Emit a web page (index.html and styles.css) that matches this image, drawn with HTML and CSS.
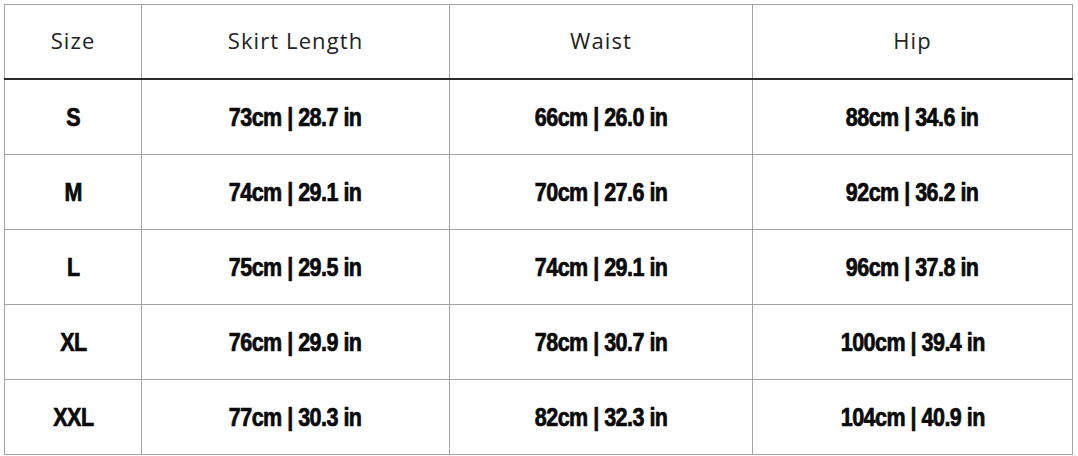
FILE: index.html
```html
<!DOCTYPE html>
<html>
<head>
<meta charset="utf-8">
<link rel="stylesheet" href="styles.css">
</head>
<body>
<table class="size-chart">
  <colgroup>
    <col class="c-size"><col class="c-len"><col class="c-waist"><col class="c-hip">
  </colgroup>
  <thead>
    <tr><th>Size</th><th>Skirt Length</th><th>Waist</th><th>Hip</th></tr>
  </thead>
  <tbody>
    <tr><td><span class="v">S</span></td><td><span class="v">73cm | 28.7 in</span></td><td><span class="v">66cm | 26.0 in</span></td><td><span class="v">88cm | 34.6 in</span></td></tr>
    <tr><td><span class="v">M</span></td><td><span class="v">74cm | 29.1 in</span></td><td><span class="v">70cm | 27.6 in</span></td><td><span class="v">92cm | 36.2 in</span></td></tr>
    <tr><td><span class="v">L</span></td><td><span class="v">75cm | 29.5 in</span></td><td><span class="v">74cm | 29.1 in</span></td><td><span class="v">96cm | 37.8 in</span></td></tr>
    <tr><td><span class="v">XL</span></td><td><span class="v">76cm | 29.9 in</span></td><td><span class="v">78cm | 30.7 in</span></td><td><span class="v">100cm | 39.4 in</span></td></tr>
    <tr><td><span class="v">XXL</span></td><td><span class="v">77cm | 30.3 in</span></td><td><span class="v">82cm | 32.3 in</span></td><td><span class="v">104cm | 40.9 in</span></td></tr>
  </tbody>
</table>
</body>
</html>
```

FILE: styles.css
```css
html, body {
  margin: 0;
  padding: 0;
  background: #fff;
}
body {
  padding: 4px 0 0 4px;
}
.size-chart {
  border-collapse: collapse;
  table-layout: fixed;
  width: 1068px;
}
.c-size { width: 137px; }
.c-len { width: 308px; }
.c-waist { width: 303px; }
.c-hip { width: 320px; }
.size-chart th,
.size-chart td {
  border: 1px solid #a4a4a4;
  text-align: center;
  padding: 0;
  height: 74px;
}
.size-chart th {
  font-family: "Open Sans", "Noto Sans", sans-serif;
  font-weight: 400;
  font-size: 22px;
  letter-spacing: 1.1px;
  color: #222;
  border-bottom: 2px solid #2a2a2a;
  height: 70px;
  padding-bottom: 3px;
}
.size-chart td {
  font-family: "Liberation Sans", "Arial", sans-serif;
  font-weight: 700;
  font-size: 25px;
  color: #0a0a0a;
  letter-spacing: -0.6px;
}
.v {
  display: inline-block;
  transform: scaleX(0.86);
  -webkit-text-stroke: 0.7px #0a0a0a;
}
```
